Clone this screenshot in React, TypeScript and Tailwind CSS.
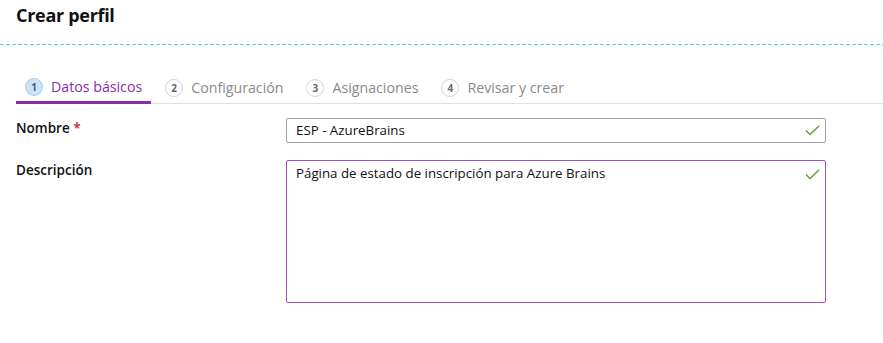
import React from "react";

function Check() {
  return (
    <svg width="15" height="11" viewBox="0 0 15 11" className="shrink-0">
      <path d="M1 5.5 L5 9.5 L14 1" fill="none" stroke="#5ea02e" strokeWidth="1.5" />
    </svg>
  );
}

function Tab({ n, label, active }: { n: number; label: string; active?: boolean }) {
  return (
    <div className={`flex items-center h-full px-[9px] ${active ? "border-b-[3px] border-[#8a2da6]" : ""}`}>
      <div
        className={`w-[18px] h-[18px] rounded-full flex items-center justify-center text-[10px] font-bold ${
          active ? "bg-[#cfe3f6] border border-[#a9cbea] text-[#3a5f8c]" : "border border-[#d4d4d4] text-[#666]"
        }`}
      >
        {n}
      </div>
      <span className={`ml-[8px] text-[14.2px] ${active ? "text-[#8a2da6]" : "text-[#8a8a8a]"}`}>{label}</span>
    </div>
  );
}

export default function App() {
  return (
    <div className="w-[883px] h-[343px] bg-white text-[#111]" style={{ fontFamily: '"Open Sans", "Noto Sans", sans-serif' }}>
      <div className="pl-[16px] pt-[1px] h-[44px]">
        <h1 className="text-[18px] font-bold tracking-[-0.3px] leading-[28px]">Crear perfil</h1>
      </div>
      <div className="h-px w-full bg-[linear-gradient(to_right,#55cdf2_4px,transparent_4px)] bg-[length:6px_1px]" />
      <div className="pt-[28px] pl-[16px] flex items-end">
        <div className="flex h-[31px] items-center">
          <Tab n={1} label="Datos básicos" active />
        </div>
        <div className="flex flex-1 h-[31px] items-center border-b border-[#e0e0e0] gap-[5px] pl-[5px]">
          <Tab n={2} label="Configuración" />
          <Tab n={3} label="Asignaciones" />
          <Tab n={4} label="Revisar y crear" />
        </div>
      </div>
      <div className="pl-[16px] pt-[14px] flex">
        <div className="w-[270px] text-[13.5px] font-semibold pt-0">
          Nombre <span className="text-[#c4262e]">*</span>
        </div>
        <div className="w-[540px] h-[25px] border border-[#a3a3a3] rounded-[2px] flex items-center justify-between pl-[9px] pr-[5px]">
          <span className="text-[13.3px]">ESP - AzureBrains</span>
          <Check />
        </div>
      </div>
      <div className="pl-[16px] pt-[17px] flex">
        <div className="w-[270px] text-[13.5px] font-semibold pt-0">Descripción</div>
        <div className="w-[540px] h-[143px] border border-[#a44fc4] rounded-[2px] flex items-start justify-between pl-[9px] pr-[5px] pt-[3px]">
          <span className="text-[13.3px]">Página de estado de inscripción para Azure Brains</span>
          <div className="pt-[5px]">
            <Check />
          </div>
        </div>
      </div>
    </div>
  );
}
